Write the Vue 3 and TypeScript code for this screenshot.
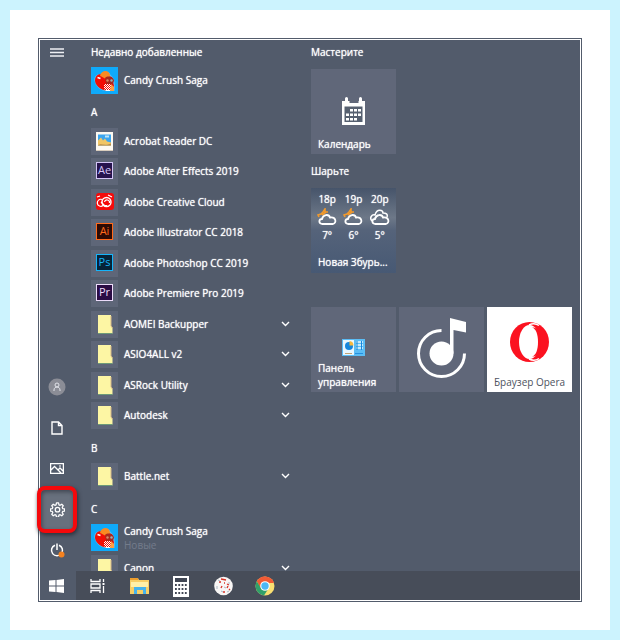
<script setup lang="ts">
type IconKind = 'candy' | 'picture' | 'adobe' | 'cloud' | 'folder'

interface Row {
  kind: 'letter' | 'app'
  label: string
  icon?: IconKind
  badge?: string
  tone?: string
  expandable?: boolean
  note?: string
}

const letter = (label: string): Row => ({ kind: 'letter', label })
const folder = (label: string): Row => ({ kind: 'app', label, icon: 'folder', expandable: true })
const adobe = (label: string, badge: string, tone: string): Row => ({ kind: 'app', label, icon: 'adobe', badge, tone })

const rows: Row[] = [
  { kind: 'app', label: 'Candy Crush Saga', icon: 'candy' },
  letter('A'),
  { kind: 'app', label: 'Acrobat Reader DC', icon: 'picture' },
  adobe('Adobe After Effects 2019', 'Ae', 'ae'),
  { kind: 'app', label: 'Adobe Creative Cloud', icon: 'cloud' },
  adobe('Adobe Illustrator CC 2018', 'Ai', 'ai'),
  adobe('Adobe Photoshop CC 2019', 'Ps', 'ps'),
  adobe('Adobe Premiere Pro 2019', 'Pr', 'pr'),
  folder('AOMEI Backupper'),
  folder('ASIO4ALL v2'),
  folder('ASRock Utility'),
  folder('Autodesk'),
  letter('B'),
  folder('Battle.net'),
  letter('C'),
  { kind: 'app', label: 'Candy Crush Saga', icon: 'candy', note: 'Новые' },
  folder('Canon'),
]

const forecast = [
  { day: '18р', temp: '7°', sun: true },
  { day: '19р', temp: '6°', sun: true },
  { day: '20р', temp: '5°', sun: false },
]

const dots = [0, 1, 2, 3, 4, 5, 6, 7, 8, 9, 10, 11]
</script>

<template>
  <main class="page">
    <div class="frame">
      <div class="desktop">
        <div class="menu">
          <nav class="rail">
            <button class="rail-btn top" aria-label="Меню">
              <svg width="14" height="9" viewBox="0 0 14 9"><path d="M0 1h14M0 4.500h14M0 8h14" stroke="#eef0f4" stroke-width="1.300" /></svg>
            </button>
            <button class="rail-btn" aria-label="Пользователь">
              <svg width="18" height="18" viewBox="0 0 18 18">
                <circle cx="9" cy="9" r="8.500" fill="#8b8d96" />
                <circle cx="9" cy="7" r="2" fill="none" stroke="#e2e4ea" />
                <path d="M6 13v-1c0-4 6-4 6 0v1" fill="none" stroke="#e2e4ea" />
              </svg>
            </button>
            <button class="rail-btn" aria-label="Документы">
              <svg width="12" height="14" viewBox="0 0 12 14"><path d="M1 1h6.500l3.500 3.500V13H1zM7.500 1v3.500H11" fill="none" stroke="#fff" stroke-width="1.400" /></svg>
            </button>
            <button class="rail-btn" aria-label="Изображения">
              <svg width="14" height="11" viewBox="0 0 14 11">
                <path d="M.6.600h12.800v9.800H.6zM1 7l3.500-3.500L11 10M8 7l2-2 3 3" fill="none" stroke="#fff" stroke-width="1.300" />
                <path d="M9 2.500h2v1H9z" fill="#fff" />
              </svg>
            </button>
            <button class="rail-btn active" aria-label="Параметры">
              <svg width="15" height="15" viewBox="0 0 24 24" fill="none" stroke="#fff" stroke-width="2">
                <path d="M10.300 1.500h3.400l.6 3 1.900.8 2.600-1.700 2.400 2.400-1.700 2.600.8 1.900 3 .6v3.400l-3 .6-.8 1.900 1.700 2.600-2.400 2.400-2.600-1.700-1.900.8-.6 3h-3.400l-.6-3-1.900-.8-2.600 1.700-2.400-2.400 1.700-2.600-.8-1.900-3-.6v-3.400l3-.6.8-1.900-1.700-2.600 2.400-2.400 2.600 1.700 1.900-.8z" stroke-linejoin="round" />
                <circle cx="12" cy="12.300" r="3.600" />
              </svg>
            </button>
            <button class="rail-btn" aria-label="Выключение">
              <svg width="15" height="15" viewBox="0 0 15 15">
                <path d="M5 2.200A5.500 5.500 0 1 0 9 2.200M7 .5v6.500" fill="none" stroke="#fff" stroke-width="1.500" />
                <circle cx="11.500" cy="11.500" r="3" fill="#f5821f" />
              </svg>
            </button>
          </nav>

          <section class="apps">
            <h2 class="recent">Недавно добавленные</h2>
            <ul class="list">
              <li v-for="(row, i) in rows" :key="i">
                <h3 v-if="row.kind === 'letter'" class="letter">{{ row.label }}</h3>
                <button v-else class="app">
                  <span class="chip" :class="row.icon">
                    <span v-if="row.icon === 'adobe'" class="badge" :class="row.tone">{{ row.badge }}</span>
                    <svg v-else-if="row.icon === 'folder'" width="16" height="20" viewBox="0 0 16 20">
                      <path d="M1 0h13v11l1.500 2v5.500H1z" fill="#fdf6a4" />
                      <path d="M14 1v10l1.500 2" fill="none" stroke="#d8b98a" />
                      <path d="M1 18.500h14.500" stroke="#6d9a78" />
                    </svg>
                    <svg v-else-if="row.icon === 'picture'" width="18" height="20" viewBox="0 0 18 20">
                      <path d="M0 0h17v19H0z" fill="#fdf9f2" />
                      <path d="M2 2.500h13v11H2z" fill="#3ba5ef" />
                      <path d="M2 13.500v-5l3-3 2 3 2-2 2 3 4 1v3z" fill="#f1c665" />
                      <path d="M2 13.500c3-3 6 1 13-2v2z" fill="#b98b4b" />
                      <path d="M9 3.500h4v2H9z" fill="#bfe6fa" />
                      <path d="M0 18.500h17" stroke="#d9cdbd" />
                    </svg>
                    <svg v-else-if="row.icon === 'cloud'" width="18" height="17" viewBox="0 0 18 17">
                      <rect width="18" height="17" rx="3" fill="#f40b0b" />
                      <circle cx="10.500" cy="9" r="4.500" fill="none" stroke="#fff" stroke-width="1.400" />
                      <path d="M6 6.500a3.500 3.500 0 1 0 1 6h4M1 4l3-1M12 2l4 2M8.500 9a2.500 2.500 0 0 1 5 1M5 9l4 4" fill="none" stroke="#fff" stroke-width="1.200" />
                    </svg>
                    <svg v-else width="27" height="27" viewBox="0 0 27 27">
                      <path d="M3.500 14c-1-5 4-8 7-6 1-5 8-4 9 0 4 3 5 9 4 16h-8c-6 0-11-5-12-10z" fill="#58c0f8" />
                      <path d="M4 14c0-6 4-8 8-6l9 2 2 9-3 5c-9 0-15-4-16-10z" fill="#f20d05" />
                      <path d="M9 9c1-6 9-7 10-1l-1 4c-3 1-4-1-9-3z" fill="#f98a22" />
                      <path d="M6.500 10.500l3 1" stroke="#fff" stroke-width="1.500" />
                      <path d="M14 11c3-3 9-1 9 3l-2 4-6-1z" fill="#a8281d" />
                      <circle cx="16.500" cy="13.500" r="1.200" fill="#d58a68" />
                      <circle cx="20.500" cy="13.500" r="1.200" fill="#9ab0b4" />
                      <path d="M13 17h7v7h-5l-2-2z" fill="#fff" />
                      <path d="M13 17.500h7M13 19.500h7M13 21.500h7" stroke="#f20d05" stroke-dasharray="1 1" />
                      <path d="M14 18.500h6M14 20.500h6M14 22.500h6" stroke="#f20d05" stroke-dasharray="1 1" />
                      <path d="M20 17l3 3v4h-4z" fill="#ff9d42" />
                    </svg>
                  </span>
                  <span class="name" :class="{ noted: row.note }">{{ row.label }}<small v-if="row.note">{{ row.note }}</small></span>
                  <svg v-if="row.expandable" class="chevron" width="9" height="6" viewBox="0 0 9 6"><path d="M1 1l3.500 3.500L8 1" fill="none" stroke="#fff" stroke-width="1.400" /></svg>
                </button>
              </li>
            </ul>
          </section>

          <section class="tiles">
            <h2 class="group">Мастерите</h2>
            <div class="grid">
              <button class="tile">
                <svg class="art calendar" width="24" height="28" viewBox="0 0 24 28">
                  <path d="M0 4h3V1.500a1.500 1.500 0 0 1 3 0V4h1.500v2h9V4H17V1.500a1.500 1.500 0 0 1 3 0V4h3v24H0z" fill="#fff" />
                  <path d="M2.500 9.500h18V25h-18z" fill="#566070" />
                  <path d="M8 12h3v2.500H8zM12 12h3v2.500h-3zM16 12h3v2.500h-3zM4 16.500h3V19H4zM8 16.500h3V19H8zM12 16.500h3V19h-3zM16 16.500h3V19h-3zM4 21h3v2.500H4zM8 21h3v2.500H8zM12 21h3v2.500h-3z" fill="#fff" />
                </svg>
                <span class="caption">Календарь</span>
              </button>
            </div>
            <h2 class="group">Шарьте</h2>
            <div class="grid">
              <button class="tile weather">
                <span class="days">
                  <span v-for="f in forecast" :key="f.day" class="day">
                    <span>{{ f.day }}</span>
                    <svg width="20" height="18" viewBox="0 0 20 18" fill="none">
                      <path v-if="f.sun" d="M2 9l-1-2 3-1 2-2 2-3 0 3 3 0M5 7l4-3" stroke="#f39a2b" stroke-width="1.600" />
                      <path v-else d="M2 13c-3-3 0-7 3-6 2-7 8-5 8-2 3 0 5 1 4 4M5 10l3-3" stroke="#fff" stroke-width="1.500" />
                      <path d="M5 16c-4-1-3-5 0-5 1-5 7-5 8-1.500 6-1 7 5.500 3 6.500z" stroke="#fff" stroke-width="1.800" />
                    </svg>
                    <span>{{ f.temp }}</span>
                  </span>
                </span>
                <span class="caption">Новая Збурь...</span>
              </button>
            </div>
            <div class="grid last">
              <button class="tile">
                <svg class="art panel" width="23" height="17" viewBox="0 0 23 17">
                  <path d="M0 0h23v17H0z" fill="#5bbdf5" />
                  <path d="M1 1h11v15H1z" fill="#e8f7ff" />
                  <circle cx="7" cy="7" r="4" fill="#1686dc" />
                  <path d="M7.500 6.500V2a4.500 4.500 0 0 1 4 4.500z" fill="#f5b940" />
                  <path d="M3 14.500h7" stroke="#c1a274" />
                  <path d="M14 3h7M14 6h7M14 9h7" stroke="#e8f7ff" stroke-width="1.500" />
                  <path d="M15 2v9M19.500 2v9" stroke="#1686dc" />
                  <path d="M13 14.500h8" stroke="#2590df" />
                </svg>
                <span class="caption">Панель<br>управления</span>
              </button>
              <button class="tile" aria-label="Музыка">
                <svg class="art music" width="52" height="62" viewBox="0 0 52 62">
                  <path d="M25.500 13.500A23 23 0 1 0 48.500 36.500" fill="none" stroke="#fff" stroke-width="3" />
                  <circle cx="25.500" cy="36.500" r="12" fill="#fff" />
                  <path d="M34 1v35.500h3.500V13L50 15.500V5z" fill="#fff" />
                </svg>
              </button>
              <button class="tile white">
                <svg class="art opera" width="39" height="40" viewBox="0 0 39 40">
                  <ellipse cx="19.500" cy="20" rx="19.500" ry="20" fill="#fb1220" />
                  <ellipse cx="19.500" cy="20" rx="10.500" ry="17" fill="#fff" />
                  <path d="M19 3c4-2 7-1.500 10 .5M19 37c4 2 7 1.500 10-.5" fill="none" stroke="#fff" stroke-width="1.500" />
                  <path d="M22 5.500c5-1 9 5 9 14.500s-4 15.500-9 14.500c4-1 6-7 6-14.500s-2-13.500-6-14.500z" fill="#fb1220" />
                </svg>
                <span class="caption">Браузер Opera</span>
              </button>
            </div>
          </section>
        </div>

        <footer class="taskbar">
          <button class="start" aria-label="Пуск">
            <svg width="15" height="14" viewBox="0 0 15 14"><path d="M0 1.500L6.500 1v5.500H0zM7.500 1L15 0v6.500H7.500zM0 7.500h6.500V13L0 12.500zM7.500 7.500H15V14l-7.500-1z" fill="#fff" /></svg>
          </button>
          <button class="task" aria-label="Представление задач">
            <svg width="15" height="14" viewBox="0 0 15 14">
              <path d="M1 0v2.500h9V0M1 14v-2.500h9V14M1 5h9v4H1zM13.500 0v3M13.500 7v7" fill="none" stroke="#fff" stroke-width="1.300" />
              <path d="M12.500 4h2v2h-2z" fill="#fff" />
            </svg>
          </button>
          <button class="task" aria-label="Проводник">
            <svg width="19" height="18" viewBox="0 0 19 18">
              <path d="M0 1h8l1 2h10v14H0z" fill="#f8cf66" />
              <path d="M0 1h8v2H0z" fill="#ed9d2d" />
              <path d="M1 5h17v5H1z" fill="#fff0a8" />
              <path d="M4 17v-7h12v7h-3v-4H7v4z" fill="#46b3ec" />
            </svg>
          </button>
          <button class="task" aria-label="Калькулятор">
            <svg width="16" height="21" viewBox="0 0 16 21">
              <path d="M0 0h16v21H0z" fill="#fff" />
              <path d="M2 2h12v4H2z" fill="#414754" />
              <rect v-for="d in dots" :key="d" :x="2 + (d % 4) * 3.300" :y="8 + Math.floor(d / 4) * 4" width="1.800" height="2" fill="#414754" />
            </svg>
          </button>
          <button class="task" aria-label="Рисование">
            <svg width="19" height="20" viewBox="0 0 19 20">
              <circle cx="9.500" cy="10" r="9.300" fill="#f8f6f5" />
              <path d="M7 3l5 1M5 6h2M13 8l2 1M13 12l1-2M7 12l1-2M9 16h2M10 7h1M15 14l1-1" stroke="#d63226" stroke-width="1.300" />
              <path d="M4 4l2 1M10 11l2 1M7 15l2 1M15 6v2M3 10v3M13 16l2-1" stroke="#aab7c4" />
            </svg>
          </button>
          <button class="task" aria-label="Chrome">
            <svg width="20" height="20" viewBox="0 0 20 20">
              <circle cx="10" cy="10" r="9.500" fill="#fbe071" />
              <path d="M1.800 5.200A9.500 9.500 0 0 1 19 7h-9L5.500 12z" fill="#f15a35" />
              <path d="M1.800 5.200A9.500 9.500 0 0 0 9 19.500l4.500-7-7 .5z" fill="#31a06a" />
              <circle cx="10" cy="10" r="4.800" fill="#fff" />
              <circle cx="10" cy="10" r="3.700" fill="#4cb8f5" />
            </svg>
          </button>
        </footer>
      </div>
    </div>
  </main>
</template>

<style>
body {
  background: #ccf3fe;
}
</style>

<style scoped>
* {
  box-sizing: border-box;
}
.page {
  height: 100vh;
  padding: 28px;
  border: 10px solid #ccf3fe;
  background: #fff;
  font-family: "Open Sans", "Noto Sans", sans-serif;
  font-size: 10px;
  font-weight: 400;
  color: #fff;
  text-shadow: 0 0 1px #fff;
}
.frame {
  height: 100%;
  padding: 1px;
  border: 1px solid #525b6b;
}
.desktop {
  display: flex;
  flex-direction: column;
  height: 100%;
  background: #525b6b;
}
button {
  display: flex;
  margin: 0;
  padding: 0;
  border: 0;
  background: none;
  color: inherit;
  font: inherit;
  text-align: left;
  text-shadow: inherit;
}
svg {
  display: block;
  flex: none;
}
h2,
h3 {
  margin: 0;
  font-size: 10px;
  font-weight: 400;
}
.menu {
  display: grid;
  grid-template-columns: 37px 221px 1fr;
  grid-template-rows: 100%;
  flex: 1;
  min-height: 0;
}
.rail {
  display: flex;
  flex-direction: column;
}
.rail-btn {
  align-items: center;
  justify-content: center;
  flex: none;
  width: 40px;
  height: 41px;
  margin-left: -3px;
}
.rail-btn.top {
  height: 24px;
  margin-bottom: auto;
}
.rail-btn.active {
  height: 47px;
  margin-block: -3px;
  border: 4px solid #f5080b;
  border-radius: 8px;
  background: #68707d;
  box-shadow: 1px 2px 4px #2b303a, inset 1px 2px 4px #3f4652;
}
.apps {
  padding-left: 14px;
  overflow: hidden;
}
.recent {
  height: 25px;
  line-height: 24px;
}
.list {
  display: grid;
  grid-auto-rows: 30px 31px;
  margin: 0;
  padding: 0;
  list-style: none;
}
.letter {
  padding-top: 2px;
  line-height: 30px;
}
.app {
  align-items: center;
  width: 100%;
  height: 30px;
}
.chip {
  display: flex;
  justify-content: center;
  align-items: flex-start;
  flex: none;
  width: 27px;
  height: 27px;
  padding-top: 4px;
  margin-right: 6px;
  background: #5e6678;
}
.chip.candy {
  padding: 0;
  background: #0faafa;
}
.badge {
  width: 17px;
  height: 17px;
  border: 1px solid;
  font-size: 11px;
  line-height: 14px;
  text-align: center;
  text-shadow: none;
}
.badge.ae {
  background: #26134d;
  color: #d3c5f5;
}
.badge.ai {
  background: #2d0a04;
  color: #ff6a1c;
}
.badge.ps {
  background: #062338;
  color: #16b4fa;
}
.badge.pr {
  background: #2b0c44;
  color: #ecdcfa;
}
.name {
  flex: 1;
  line-height: 14px;
}
.name.noted {
  padding-top: 2px;
}
.name small {
  display: block;
  font-size: 10px;
  color: #747c8b;
  text-shadow: none;
}
.chevron {
  margin-right: 8px;
}
.tiles {
  padding-left: 13px;
}
.group {
  height: 29px;
  line-height: 24px;
}
.group:not(:first-child) {
  height: 34px;
  line-height: 34px;
}
.grid {
  display: grid;
  grid-template-columns: repeat(3, 85px);
  grid-auto-rows: 85px;
  gap: 3px;
}
.grid.last {
  margin-top: 34px;
}
.tile {
  flex-direction: column;
  align-items: center;
  background: #606779;
}
.art {
  margin-top: auto;
}
.tile .caption {
  align-self: stretch;
  padding: 0 0 3px 7px;
  line-height: 14px;
}
.calendar {
  margin-bottom: 12px;
}
.panel {
  margin-bottom: 5px;
}
.music {
  margin-bottom: 13px;
}
.opera {
  margin-bottom: 13px;
}
.tile.white {
  background: #fff;
  color: #4d5360;
  text-shadow: none;
}
.weather {
  justify-content: space-between;
  background: linear-gradient(#46546a, #6d7888 35%, #55637a 50%, #475974);
}
.days {
  display: flex;
  justify-content: space-around;
  width: 100%;
  padding: 4px 3px 0;
}
.day {
  display: flex;
  flex-direction: column;
  align-items: center;
  line-height: 14px;
  gap: 2px;
}
.weather .caption {
  padding-bottom: 4px;
}
.taskbar {
  display: flex;
  height: 29px;
  padding-top: 1px;
  background: #474d59;
}
.start,
.task {
  align-items: center;
  justify-content: center;
}
.start {
  width: 36px;
  margin-top: -1px;
  padding: 1px 3px 0 0;
  background: #525b6b;
}
.task {
  width: 42px;
}
</style>
